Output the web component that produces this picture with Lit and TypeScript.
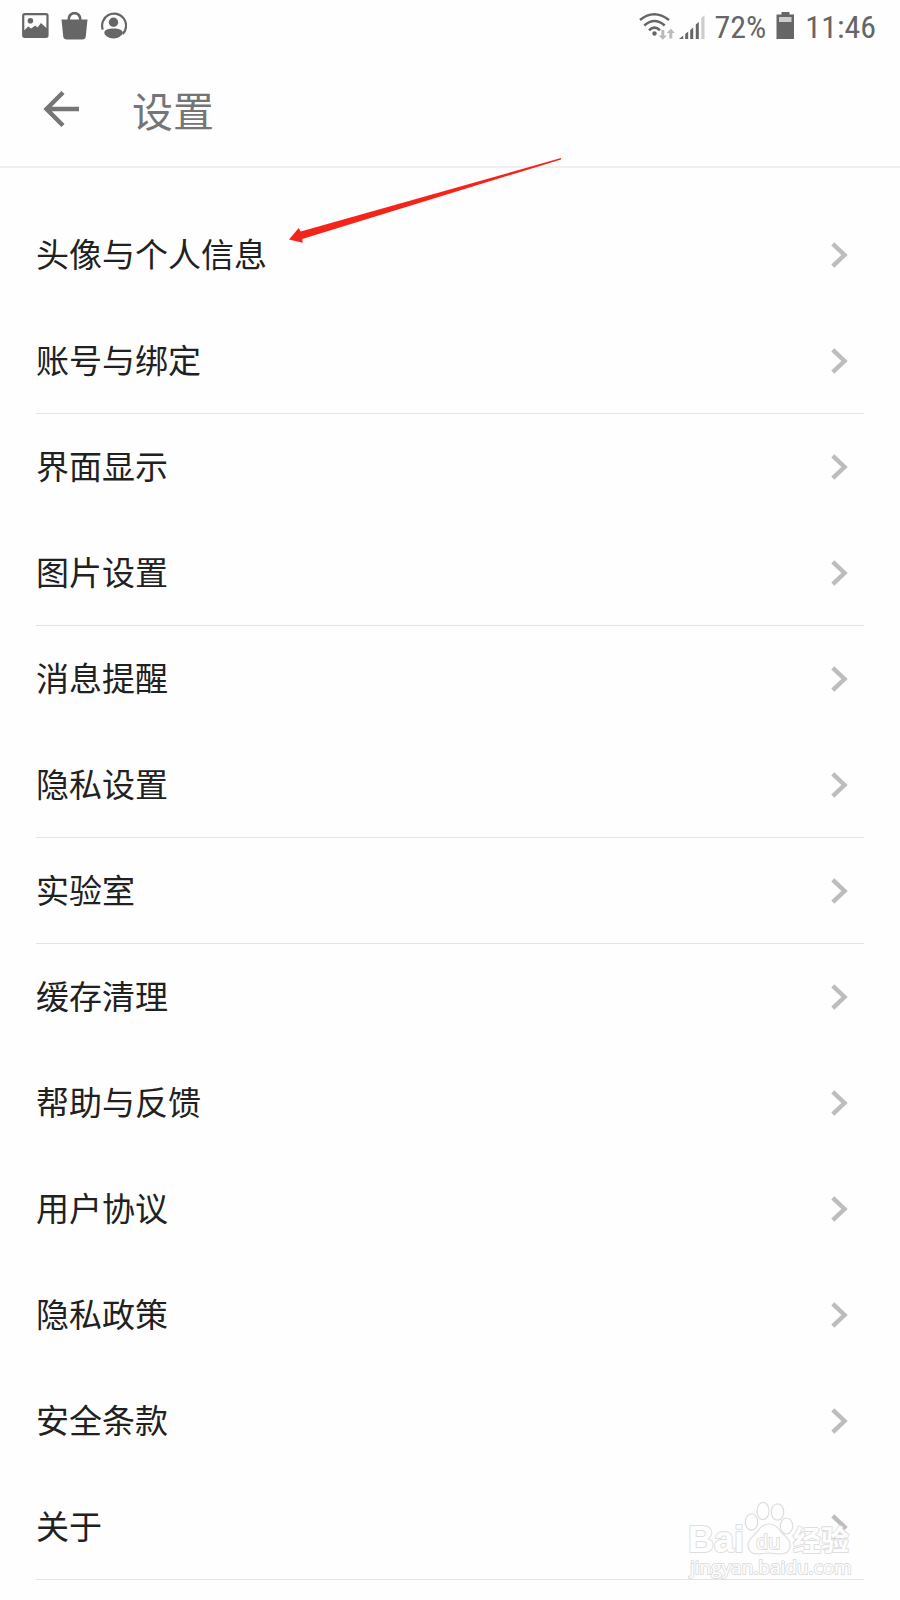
import { LitElement, html, css } from "lit";
import { customElement } from "lit/decorators.js";

const GROUPS: string[][] = [
  ["头像与个人信息", "账号与绑定"],
  ["界面显示", "图片设置"],
  ["消息提醒", "隐私设置"],
  ["实验室"],
  ["缓存清理", "帮助与反馈", "用户协议", "隐私政策", "安全条款", "关于"],
];

@customElement("status-bar")
class StatusBar extends LitElement {
  static styles = css`
    :host {
      display: flex;
      align-items: center;
      justify-content: space-between;
      height: 52px;
      padding: 0 24px 0 22px;
      box-sizing: border-box;
      color: #666;
      font: 32px/52px "Roboto Condensed", "Roboto", sans-serif;
    }
    .side {
      display: flex;
      align-items: center;
    }
    .notices {
      gap: 12px;
    }
    .system {
      gap: 10px;
    }
    .signals {
      display: flex;
      gap: 4px;
    }
    .value {
      padding-top: 2px;
    }
    svg {
      display: block;
    }
  `;

  render() {
    return html`
      <div class="side notices">
        <svg width="27" height="28" viewBox="0 0 27 28" aria-hidden="true">
          <rect x="1.2" y="2.2" width="24.3" height="22.6" rx="1.5" fill="none" stroke="#666" stroke-width="2.2" />
          <circle cx="8.4" cy="8.800" r="2.8" fill="#666" />
          <path d="M2 18.500l4.200-4 3 2 4-3 2.300 2 3.500-4.500 6.500 6V25H2z" fill="#666" />
        </svg>
        <svg width="27" height="28" viewBox="0 0 27 28" aria-hidden="true">
          <path d="M7.800 9V6.800a5.700 5.700 0 0 1 11.400 0V9" fill="none" stroke="#666" stroke-width="2.600" />
          <path d="M.5 7.500h26l-1.700 16.700q-.4 3.300-3.600 3.300H5.800q-3.200 0-3.600-3.300z" fill="#666" />
        </svg>
        <svg width="27" height="28" viewBox="0 0 27 28" aria-hidden="true">
          <path d="M2.800 17.700A12 12 0 1 1 22.700 22" fill="none" stroke="#666" stroke-width="2.200" />
          <circle cx="13.500" cy="10.200" r="4.700" fill="#666" />
          <path d="M4.300 20.800c0-3.400 4.600-4.400 9.200-4.400s9.200 1 9.200 4.400c0 2.400-4.200 5.700-9.200 5.700s-9.200-3.300-9.200-5.700z" fill="#666" />
        </svg>
      </div>
      <div class="side system">
        <div class="signals">
          <svg width="36" height="28" viewBox="0 0 36 28" aria-hidden="true">
            <g fill="none" stroke="#666" stroke-width="2.600">
              <path d="M1 8q14-11.500 29 0" />
              <path d="M5.300 13.500q10.200-9 20.400 0" />
              <path d="M10 18.200q5.500-5 11 0" />
            </g>
            <circle cx="15.500" cy="21.500" r="2.200" fill="#666" />
            <path d="M22.300 18h3v5.500H28l-4.200 4.200-4.200-4.200h2.700zM30.300 26.500h3V21H36l-4.200-4.200-4.200 4.200h2.700z" fill="#bbb" />
          </svg>
          <svg width="26" height="28" viewBox="0 0 26 28" aria-hidden="true">
            <path d="M0 27l4.200-3.500V27zM6.200 22l3-2.500V27h-3zM11.200 18l3-2.500V27h-3zM16.800 12.500l3-2.500v17h-3z" fill="#666" />
            <path d="M22.300 6l3.200-2.700V27h-3.200z" fill="#ccc" />
          </svg>
        </div>
        <span class="value">72%</span>
        <svg width="19" height="28" viewBox="0 0 19 28" aria-hidden="true">
          <path d="M5.500 0h8v2.500H18V27H.5V2.500h5z" fill="#666" />
          <path d="M3 5h12.500v5H3z" fill="#ccc" />
        </svg>
        <time class="value">11:46</time>
      </div>
    `;
  }
}

@customElement("page-watermark")
class PageWatermark extends LitElement {
  static styles = css`
    :host {
      display: block;
      pointer-events: none;
    }
    svg {
      display: block;
    }
    .mark {
      fill: #fefefe;
      stroke: #dedede;
      stroke-width: 2px;
      stroke-linejoin: round;
      paint-order: stroke;
      font-family: "Open Sans", "Liberation Sans", sans-serif;
    }
    .brand {
      font-size: 36px;
      font-weight: 700;
      font-family: "Liberation Sans", sans-serif;
    }
    .small {
      font-size: 20px;
    }
    .cjk {
      font-size: 28px;
      font-weight: 700;
      font-family: "Noto Sans CJK SC", sans-serif;
    }
    .site {
      font-size: 19px;
    }
    .paw {
      fill: #fefefe;
      stroke: #dedede;
      stroke-width: 1.2px;
    }
  `;

  render() {
    return html`
      <svg width="172" height="84" viewBox="0 0 172 84" aria-hidden="true">
        <text class="mark brand" x="2" y="55">Bai</text>
        <g class="paw">
          <ellipse cx="65.500" cy="25" rx="6.200" ry="8.200" />
          <ellipse cx="77" cy="14" rx="6" ry="8.700" />
          <ellipse cx="91.500" cy="15" rx="6.200" ry="8.200" />
          <ellipse cx="100.500" cy="29" rx="6.200" ry="8" />
          <path d="M83 27c7 0 9.500 5 13.500 9.500 4 4 8.500 7 7.500 13.500-.8 5-5 7-10 7-4 0-7-1-11-1s-7 1-11 1c-5 0-9-2.500-9.800-7-.8-6 3.300-9.500 7.300-13.500C73.500 32 76 27 83 27z" />
        </g>
        <text class="mark small" x="70" y="52">du</text>
        <text class="mark cjk" x="107" y="54">经验</text>
        <text class="mark site" x="4" y="77">jingyan.baidu.com</text>
      </svg>
    `;
  }
}

@customElement("app-root")
class AppRoot extends LitElement {
  static styles = css`
    :host {
      display: block;
      position: relative;
      min-height: 100vh;
      background: #fefefe;
      font-family: "Noto Sans CJK SC", sans-serif;
    }
    .bar {
      display: flex;
      align-items: center;
      gap: 48px;
      height: 116px;
      padding: 0 40px;
      box-sizing: border-box;
      border-bottom: 2px solid #efefef;
    }
    .back {
      display: flex;
      padding: 0;
      border: 0;
      background: none;
      cursor: pointer;
    }
    .title {
      margin: 0;
      color: #757575;
      font-size: 41px;
      line-height: 60px;
      font-weight: 400;
    }
    .list {
      padding: 34px 36px 18px;
    }
    .group {
      margin: 0;
      padding: 0;
      list-style: none;
      border-bottom: 1px solid #e4e4e4;
    }
    .row {
      display: flex;
      align-items: center;
      justify-content: space-between;
      height: 106px;
      padding-right: 16px;
      color: #212121;
      font-size: 33px;
      line-height: 48px;
      text-decoration: none;
    }
    .item:last-child .row {
      height: 105px;
    }
    .label {
      padding-bottom: 4px;
    }
    .last {
      position: relative;
    }
    .watermark {
      position: absolute;
      right: 6px;
      bottom: -1px;
    }
    .pointer {
      position: absolute;
      left: 286px;
      top: 156px;
      pointer-events: none;
    }
  `;

  private chevron() {
    return html`<svg width="17" height="28" viewBox="0 0 17 28" aria-hidden="true">
      <path d="M1.800 2.800L13.500 14 1.800 25.200" fill="none" stroke="#bdbdbd" stroke-width="4.400" />
    </svg>`;
  }

  private group(items: string[]) {
    return html`<ul class="group">
      ${items.map(
        (name) => html`<li class="item">
          <a class="row" href="#"><span class="label">${name}</span>${this.chevron()}</a>
        </li>`
      )}
    </ul>`;
  }

  render() {
    return html`
      <status-bar></status-bar>
      <header class="bar">
        <button class="back" type="button" aria-label="返回">
          <svg width="44" height="40" viewBox="0 0 44 40" aria-hidden="true">
            <path d="M23 3.500L6.500 20 23 36.500M6 20h33" fill="none" stroke="#757575" stroke-width="4.400" />
          </svg>
        </button>
        <h1 class="title">设置</h1>
      </header>
      <nav class="list">
        ${GROUPS.slice(0, -1).map((g) => this.group(g))}
        <div class="last">
          ${this.group(GROUPS[GROUPS.length - 1])}
          <page-watermark class="watermark"></page-watermark>
        </div>
      </nav>
      <svg class="pointer" width="278" height="90" viewBox="0 0 278 90" aria-hidden="true">
        <path d="M275 2L14.700 75.500l-2-3.500L3 83.500l13.700 3.200-.5-3.700L275 3.400z" fill="#f5241a" />
      </svg>
    `;
  }
}
